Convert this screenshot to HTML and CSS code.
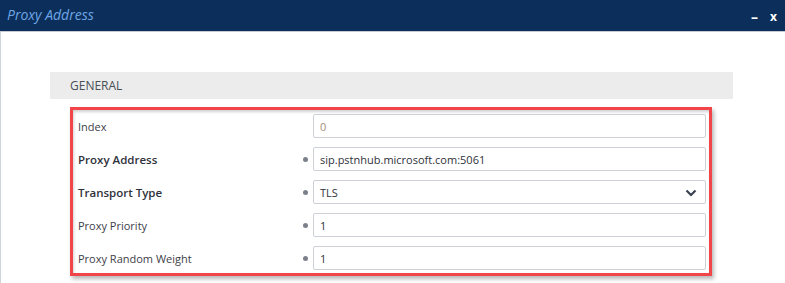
FILE: index.html
```html
<!DOCTYPE html>
<html>
<head>
<meta charset="utf-8">
<link rel="stylesheet" href="styles.css">
</head>
<body>
<div class="titlebar">
  <span class="title">Proxy Address</span>
  <div class="controls"><span class="min">–</span><span class="close">x</span></div>
</div>
<div class="content">
  <div class="section">
    <div class="section-head">GENERAL</div>
    <div class="panel">
      <div class="row">
        <label class="lbl">Index</label>
        <span class="dot hidden"></span>
        <div class="field"><span class="val ro">0</span></div>
      </div>
      <div class="row">
        <label class="lbl bold">Proxy Address</label>
        <span class="dot"></span>
        <div class="field"><span class="val">sip.pstnhub.microsoft.com:5061</span></div>
      </div>
      <div class="row">
        <label class="lbl bold">Transport Type</label>
        <span class="dot"></span>
        <div class="field select"><span class="val">TLS</span>
          <svg class="chev" width="12" height="8" viewBox="0 0 12 8"><path d="M1.5 1.5 L6 6 L10.5 1.5" fill="none" stroke="#3a4150" stroke-width="2.2"/></svg>
        </div>
      </div>
      <div class="row">
        <label class="lbl">Proxy Priority</label>
        <span class="dot"></span>
        <div class="field"><span class="val">1</span></div>
      </div>
      <div class="row">
        <label class="lbl">Proxy Random Weight</label>
        <span class="dot"></span>
        <div class="field"><span class="val">1</span></div>
      </div>
    </div>
  </div>
</div>
</body>
</html>
```
FILE: styles.css
```css
html, body {
  margin: 0;
  padding: 0;
  background: #ffffff;
  font-family: "Open Sans", "Noto Sans", sans-serif;
}
.titlebar {
  background: #0b2f5a;
  border-bottom: 1px solid #c6cbd3;
  display: flex;
  align-items: center;
  justify-content: space-between;
  padding: 0 8px 0 7px;
  box-sizing: border-box;
  height: 32px;
}
.title {
  color: #6ea6e6;
  font-style: italic;
  font-size: 14px;
  margin-top: -3px;
}
.controls {
  display: flex;
  align-items: center;
  gap: 12px;
  color: #ffffff;
  font-weight: bold;
  font-size: 13px;
  margin-top: 1px;
}
.controls .min { font-size: 14px; }
.controls .close { font-size: 12px; }
.content {
  border-left: 1px solid #cfd3da;
  height: 251px;
  padding-top: 40px;
  box-sizing: border-box;
}
.section {
  margin-left: 49px;
  width: 683px;
}
.section-head {
  height: 27px;
  background: #ececec;
  color: #4a4e57;
  font-size: 12px;
  line-height: 27px;
  padding-left: 20px;
}
.panel {
  margin-top: 8px;
  margin-left: 20px;
  width: 642px;
  box-sizing: border-box;
  border: 3px solid #f24549;
  box-shadow: 2px 3px 4px rgba(0,0,0,0.28), inset 1px 2px 3px rgba(0,0,0,0.18);
  padding: 4px 3px 3px 5px;
  display: flex;
  flex-direction: column;
  gap: 9px;
}
.row {
  display: flex;
  align-items: center;
  height: 24px;
}
.lbl {
  width: 225px;
  font-size: 11px;
  color: #3d4048;
}
.lbl.bold { font-weight: 600; font-size: 11.5px; color: #2f323a; }
.dot {
  width: 5px;
  height: 5px;
  border-radius: 50%;
  background: #7b808b;
  margin-right: 5px;
}
.dot.hidden { visibility: hidden; }
.field {
  flex: 1;
  height: 24px;
  box-sizing: border-box;
  border: 1px solid #cdd0d6;
  border-radius: 2px;
  display: flex;
  align-items: center;
  padding-left: 6px;
  padding-right: 8px;
}
.val {
  font-size: 11px;
  color: #2f323a;
}
.val.ro { color: #a88e76; }
.select { justify-content: space-between; }
.chev { margin-top: 1px; }
```
